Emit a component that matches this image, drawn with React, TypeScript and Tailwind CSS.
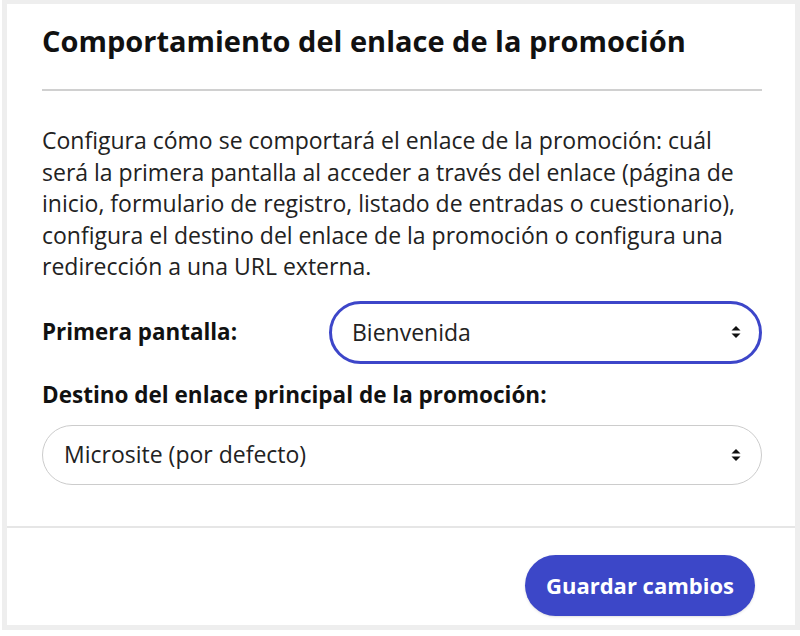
export default function App() {
  const font = { fontFamily: "'Open Sans', 'Noto Sans', sans-serif" };
  return (
    <div className="h-[636px] bg-white" style={font}>
      <div className="ml-[2px] h-[630px] bg-[#eeeeee] pl-[5px] pr-[5px] pt-[4px]">
        <div className="flex h-[621px] flex-col bg-white">
          {/* Body */}
          <div className="pl-[35px] pr-[33px] pt-[19px]">
            <h2 className="text-[29px] font-bold leading-[36px] text-[#111111]">
              Comportamiento del enlace de la promoción
            </h2>
            <div className="mt-[30px] h-[2px] bg-[#d0d0d0]" />
            <p className="mt-[34px] text-[23px] leading-[31.5px] text-[#222222]">
              Configura cómo se comportará el enlace de la promoción: cuál
              <br />
              será la primera pantalla al acceder a través del enlace (página de
              <br />
              inicio, formulario de registro, listado de entradas o cuestionario),
              <br />
              configura el destino del enlace de la promoción o configura una
              <br />
              redirección a una URL externa.
            </p>

            <div className="mt-[18px] flex items-center">
              <label className="w-[287px] text-[22.4px] font-bold text-[#111111]">Primera pantalla:</label>
              <div className="flex h-[63px] flex-1 items-center justify-between rounded-full border-[3px] border-[#3d46c9] pl-[20px] pr-[18px]">
                <span className="text-[23px] text-[#222222]">Bienvenida</span>
                <SortIcon />
              </div>
            </div>

            <div className="mt-[17px] text-[22.5px] font-bold leading-[28px] text-[#111111]">
              Destino del enlace principal de la promoción:
            </div>
            <div className="mt-[16px] flex h-[60px] items-center justify-between rounded-full border border-[#cccccc] pl-[21px] pr-[20px]">
              <span className="text-[23px] text-[#222222]">Microsite (por defecto)</span>
              <SortIcon />
            </div>
          </div>

          {/* Footer */}
          <div className="mt-[41px] h-[2px] bg-[#e6e6e6]" />
          <div className="flex flex-1 items-start justify-end pr-[40px] pt-[27px]">
            <button className="h-[61px] w-[230px] rounded-full bg-[#3c47c8] text-[22px] font-bold text-white shadow-sm">
              Guardar cambios
            </button>
          </div>
        </div>
      </div>
    </div>
  );
}

function SortIcon() {
  return (
    <svg width="10" height="14" viewBox="0 0 10 14" fill="#111111">
      <path d="M5 1 L9.5 5.5 H0.5 Z" />
      <path d="M5 13 L9.5 8.5 H0.5 Z" />
    </svg>
  );
}
